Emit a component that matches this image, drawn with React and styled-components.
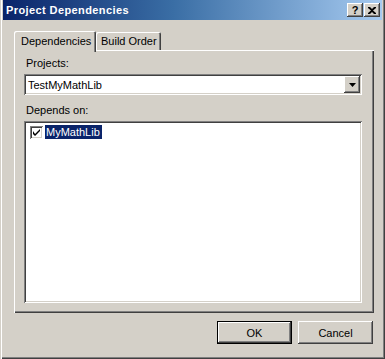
import React from "react";
import styled, { createGlobalStyle, css } from "styled-components";

const GlobalStyle = createGlobalStyle`
  html, body {
    margin: 0;
    padding: 0;
    background: #d4d0c8;
  }
  body {
    font-family: "Liberation Sans", Arial, sans-serif;
    font-size: 11px;
    color: #000;
  }
`;

const raised = css`
  box-shadow: inset -1px -1px #404040, inset 1px 1px #ffffff,
    inset -2px -2px #808080, inset 2px 2px #d4d0c8;
`;

const sunken = css`
  box-shadow: inset 1px 1px #808080, inset -1px -1px #ffffff,
    inset 2px 2px #404040, inset -2px -2px #d4d0c8;
`;

export default function App() {
  return (
    <>
      <GlobalStyle />
      <Window>
        <TitleBar>
          <Title>Project Dependencies</Title>
          <CaptionButtons>
            <CaptionButton>?</CaptionButton>
            <CaptionButton $close>
              <svg width="8" height="7" viewBox="0 0 8 7">
                <path d="M0 0h2l2 2 2-2h2v1L5 3.5 8 6v1H6L4 5 2 7H0V6l3-2.5L0 1z" fill="#000" />
              </svg>
            </CaptionButton>
          </CaptionButtons>
        </TitleBar>

        <Body>
          <TabStrip>
            <Tab $active>Dependencies</Tab>
            <Tab>Build Order</Tab>
          </TabStrip>

          <TabPanel>
            <Label>Projects:</Label>
            <ComboBox>
              <ComboText>TestMyMathLib</ComboText>
              <DropButton>
                <svg width="7" height="4" viewBox="0 0 7 4">
                  <path d="M0 0h7L3.5 4z" fill="#000" />
                </svg>
              </DropButton>
            </ComboBox>

            <Label $gap>Depends on:</Label>
            <ListBox>
              <ListItem>
                <CheckBox>
                  <svg width="7" height="7" viewBox="0 0 7 7">
                    <path d="M0 2v3l2 2 5-5V0L2 5z" fill="#000" />
                  </svg>
                </CheckBox>
                <ItemText $selected>MyMathLib</ItemText>
              </ListItem>
            </ListBox>
          </TabPanel>

          <ButtonRow>
            <PushButton $default>OK</PushButton>
            <PushButton>Cancel</PushButton>
          </ButtonRow>
        </Body>
      </Window>
    </>
  );
}

const Window = styled.div`
  width: 385px;
  height: 359px;
  box-sizing: border-box;
  display: flex;
  flex-direction: column;
  background: #d4d0c8;
  box-shadow: inset 1px 0 #d4d0c8, inset 2px 0 #ffffff,
    inset -1px -1px #404040, inset -2px -2px #808080;
`;

const TitleBar = styled.div`
  height: 20px;
  margin: 0 3px 0 3px;
  padding: 0 2px 0 3px;
  display: flex;
  align-items: center;
  justify-content: space-between;
  background: linear-gradient(to right, #0a246a 0%, #3a6ea5 45%, #a6caf0 100%);
`;

const Title = styled.span`
  color: #fff;
  font-weight: bold;
  font-size: 11px;
  letter-spacing: 0.4px;
`;

const CaptionButtons = styled.div`
  display: flex;
  gap: 1px;
`;

const CaptionButton = styled.div`
  width: 16px;
  height: 14px;
  box-sizing: border-box;
  display: flex;
  align-items: center;
  justify-content: center;
  background: #d4d0c8;
  font-weight: bold;
  font-size: 11px;
  line-height: 1;
  ${raised};
`;

const Body = styled.div`
  flex: 1;
  display: flex;
  flex-direction: column;
  padding: 11px 12px 0 14px;
`;

const TabStrip = styled.div`
  display: flex;
  align-items: flex-end;
  height: 19px;
  position: relative;
  z-index: 1;
`;

const Tab = styled.div`
  box-sizing: border-box;
  flex-shrink: 0;
  white-space: nowrap;
  display: flex;
  align-items: center;
  background: #d4d0c8;
  border-top-left-radius: 2px;
  border-top-right-radius: 2px;
  box-shadow: inset 1px 1px #ffffff, inset -1px 0 #404040, inset -2px 0 #808080;
  ${({ $active }) =>
    $active
      ? css`
          height: 21px;
          width: 82px;
          margin-bottom: -2px;
          padding: 0 0 2px 7px;
        `
      : css`
          height: 18px;
          width: 65px;
          padding: 0 0 0 5px;
        `}
`;

const TabPanel = styled.div`
  height: 263px;
  box-sizing: border-box;
  display: flex;
  flex-direction: column;
  padding: 6px 12px 10px 10px;
  margin-right: -1px;
  background: #d4d0c8;
  box-shadow: inset 1px 1px #ffffff, inset -1px -1px #404040,
    inset -2px -2px #808080;
`;

const Label = styled.div`
  height: 13px;
  line-height: 13px;
  padding-left: 2px;
  margin-top: ${({ $gap }) => ($gap ? "9px" : "1px")};
  margin-bottom: 4px;
`;

const ComboBox = styled.div`
  height: 21px;
  box-sizing: border-box;
  display: flex;
  align-items: center;
  justify-content: space-between;
  padding: 2px;
  background: #fff;
  ${sunken};
`;

const ComboText = styled.span`
  padding-left: 2px;
`;

const DropButton = styled.div`
  width: 16px;
  height: 17px;
  box-sizing: border-box;
  display: flex;
  align-items: center;
  justify-content: center;
  background: #d4d0c8;
  ${raised};
`;

const ListBox = styled.div`
  flex: 1;
  box-sizing: border-box;
  padding: 4px 5px 4px 6px;
  background: #fff;
  ${sunken};
`;

const ListItem = styled.div`
  display: flex;
  align-items: center;
  gap: 2px;
  height: 14px;
`;

const CheckBox = styled.div`
  width: 13px;
  height: 13px;
  box-sizing: border-box;
  display: flex;
  align-items: center;
  justify-content: center;
  background: #fff;
  ${sunken};
`;

const ItemText = styled.span`
  height: 14px;
  line-height: 14px;
  padding: 0 2px 0 1px;
  ${({ $selected }) =>
    $selected &&
    css`
      background: #0a246a;
      color: #fff;
    `}
`;

const ButtonRow = styled.div`
  display: flex;
  justify-content: flex-end;
  gap: 6px;
  margin-top: 8px;
`;

const PushButton = styled.div`
  width: 75px;
  height: 23px;
  box-sizing: border-box;
  display: flex;
  align-items: center;
  justify-content: center;
  background: #d4d0c8;
  ${({ $default }) =>
    $default
      ? css`
          box-shadow: inset 0 0 0 1px #000, inset -2px -2px #404040,
            inset 2px 2px #ffffff, inset -3px -3px #808080;
        `
      : raised}
`;
